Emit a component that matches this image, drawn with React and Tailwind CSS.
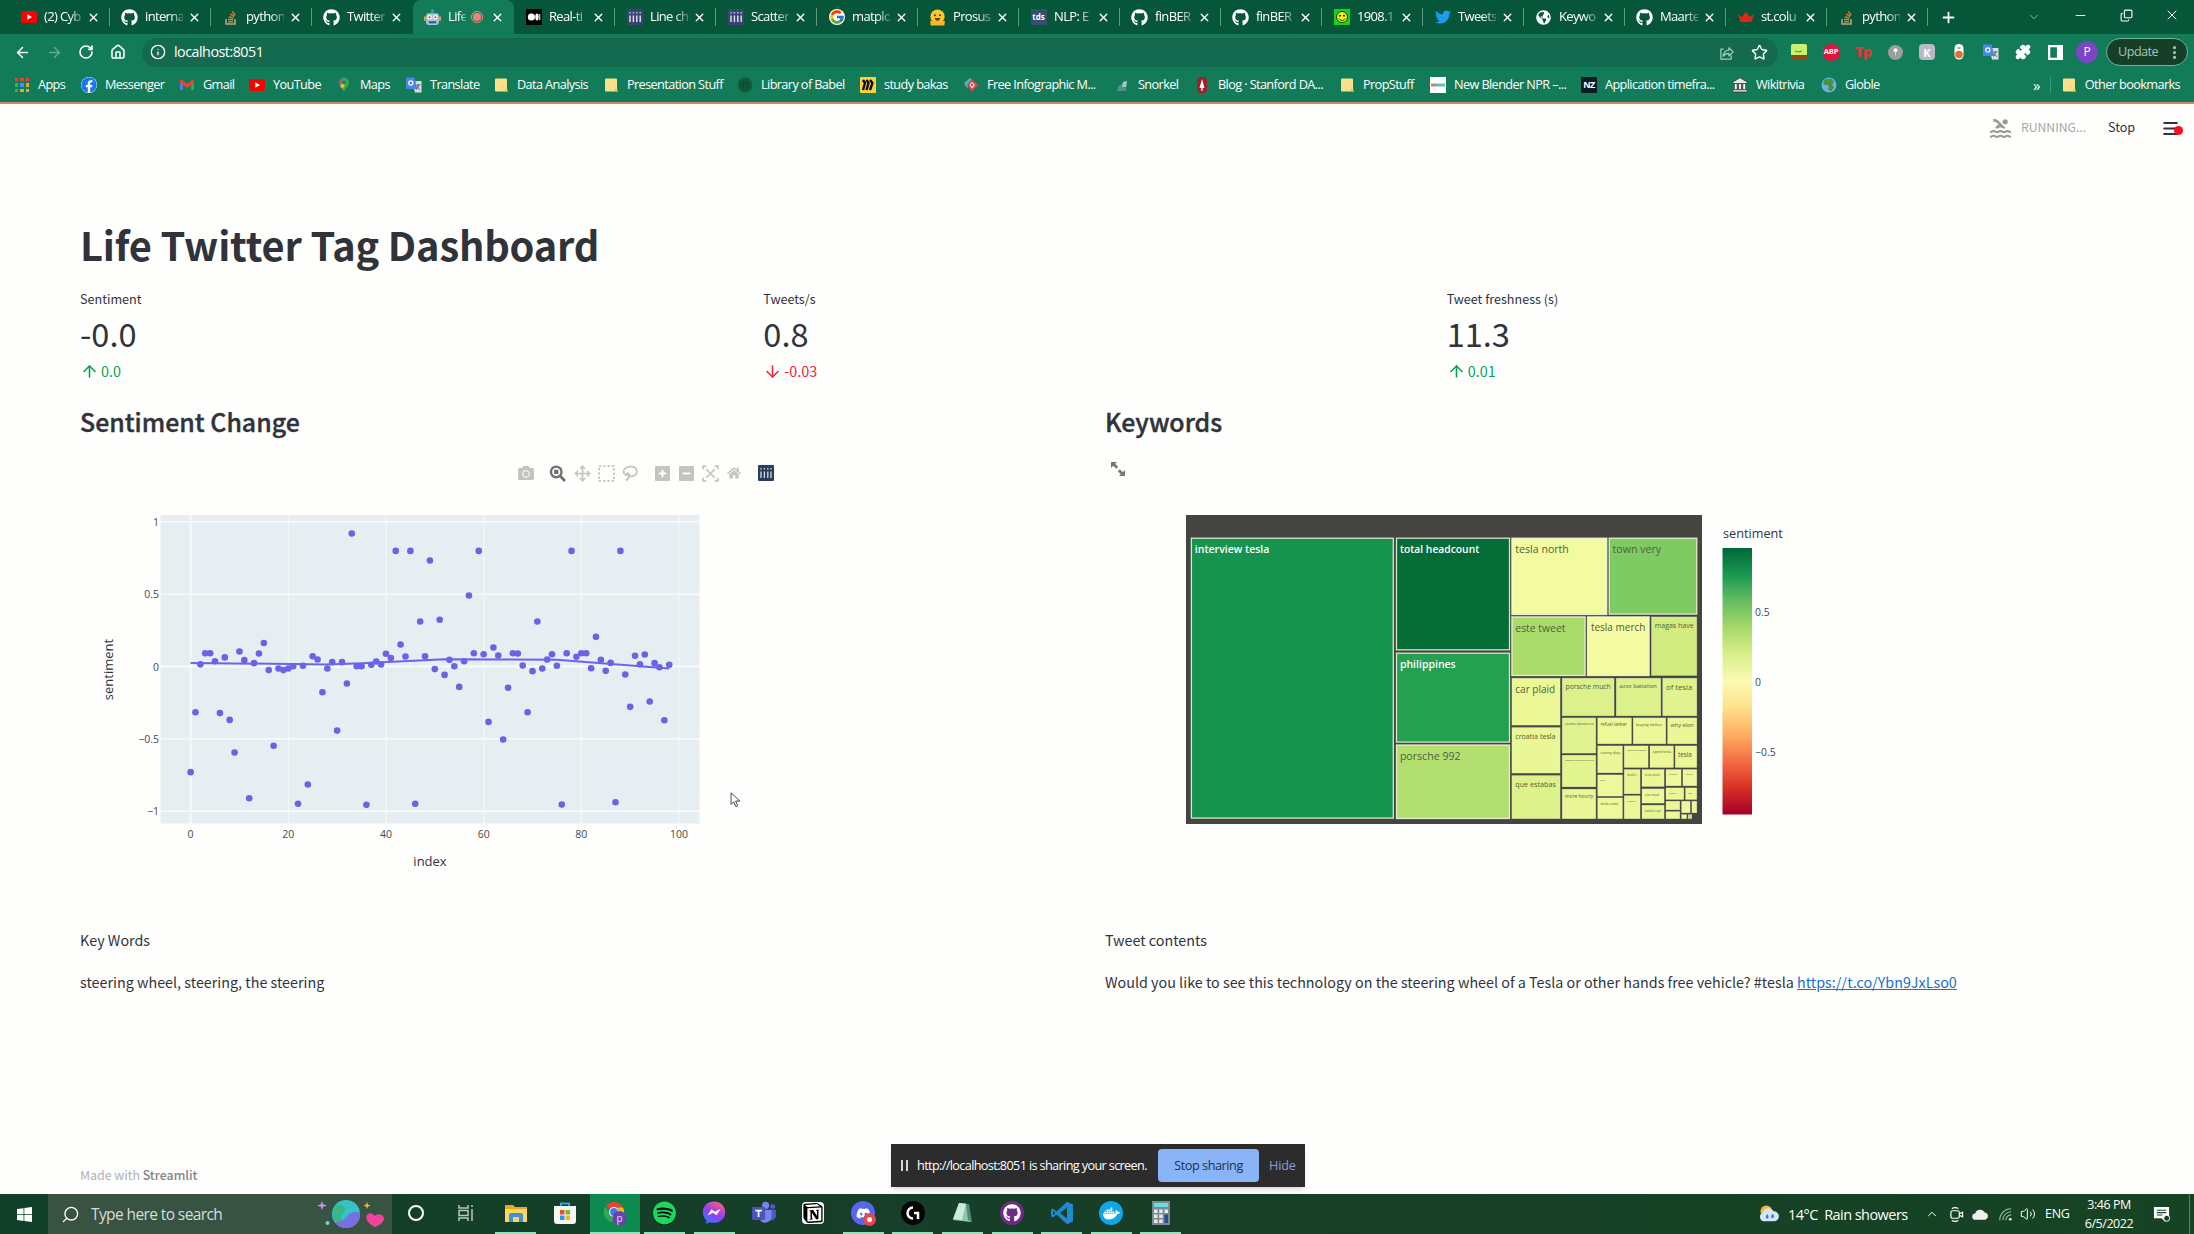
import React from "react";
import {
  FaGithub, FaTwitter, FaFacebook, FaSpotify,
  FaDiscord, FaDocker, FaCamera, FaHome, FaGlobeAmericas,
} from "react-icons/fa";
import { FcGoogle } from "react-icons/fc";
import { SiNotion } from "react-icons/si";
import { MdPool } from "react-icons/md";
import {
  ArrowLeft, ArrowRight, ArrowUp, ArrowDown, RotateCw, House, Info, Star, X, Plus, Minus,
  ChevronDown, ChevronUp, Copy, Search, Move, Volume2, Puzzle, Menu, EllipsisVertical,
} from "lucide-react";

const UI = "font-['Open_Sans','Noto_Sans',sans-serif]";
const SOURCE = "font-['Noto_Sans_CJK_SC','Noto_Sans',sans-serif]";

/* ---------- small drawn icons ---------- */

const Yt = () => (
  <svg viewBox="0 0 16 16" className="size-4"><rect y="2" width="16" height="12" rx="2" fill="#f00" /><path d="M6.3 5.2v5.6L11 8z" fill="#fff" /></svg>
);
const Gh = () => <FaGithub className="size-[17px] text-white" />;
const So = () => (
  <svg viewBox="0 0 16 16" className="size-4">
    <path d="M3 10v5h9v-5" fill="none" stroke="#b9a68c" strokeWidth="1.5" />
    <path d="M5 12.7h5M5.1 10.2l5 .6M5.8 7.6l4.7 1.5M7.2 4.9l4 2.7M9.5 2.5l2.6 4" stroke="#e07b2c" strokeWidth="1.4" />
  </svg>
);
const Robot = () => (
  <svg viewBox="0 0 16 16" className="size-[17px]">
    <rect x="2" y="4" width="12" height="11" rx="2" fill="#9fc8dc" /><rect x="0" y="7" width="2" height="4" fill="#e9a23b" /><rect x="14" y="7" width="2" height="4" fill="#e9a23b" />
    <rect x="7" y="1" width="2" height="3" fill="#5f8ea5" /><circle cx="8" cy="1.5" r="1.5" fill="#4a90c0" />
    <circle cx="5.3" cy="7.8" r="2.1" fill="#fff" /><circle cx="10.7" cy="7.8" r="2.1" fill="#fff" /><circle cx="5.3" cy="7.8" r="1" fill="#c73737" /><circle cx="10.7" cy="7.8" r="1" fill="#c73737" />
    <rect x="4.5" y="11.5" width="7" height="2" fill="#345d70" />
  </svg>
);
const Medium = () => (
  <svg viewBox="0 0 16 16" className="size-4"><rect width="16" height="16" fill="#000" /><circle cx="5.4" cy="8" r="3.6" fill="#fff" /><ellipse cx="11" cy="8" rx="1.7" ry="3.4" fill="#fff" /><rect x="13.3" y="5" width="1" height="6" fill="#fff" /></svg>
);
const Plotly = () => (
  <svg viewBox="0 0 16 16" className="size-4"><rect width="16" height="16" rx="1" fill="#3a4470" /><path d="M3 6.5V13M6.4 6.5V13M9.8 6.5V13M13.2 6.5V13" stroke="#dfe6ee" strokeWidth="1.4" /><path d="M3 3v1.6M6.4 3v1.6M9.8 3v1.6M13.2 3v1.6" stroke="#b7c6dd" strokeWidth="1.4" /></svg>
);
const Hug = () => (
  <svg viewBox="0 0 16 16" className="size-[17px]"><circle cx="8" cy="7.2" r="6.7" fill="#fcc62d" /><path d="M1 11c2 0 3 2 3 4.5H1.5zM15 11c-2 0-3 2-3 4.5h2.500z" fill="#f7a91e" /><rect x="2" y="11" width="12" height="4.500" rx="2" fill="#f9b825" /><circle cx="5.6" cy="5.900" r="1" fill="#3a3b45" /><circle cx="10.400" cy="5.900" r="1" fill="#3a3b45" /><path d="M5.500 8.500h5c0 3.300-5 3.300-5 0" fill="#7a2a20" /></svg>
);
const Tds = () => <span className="flex size-4 items-center justify-center bg-[#35506f] text-[8px] font-bold leading-none text-white">tds</span>;
const Smiley = () => (
  <svg viewBox="0 0 16 16" className="size-4"><rect width="16" height="16" fill="#12d41c" /><circle cx="8" cy="8" r="5.5" fill="#f6f01c" stroke="#233" /><circle cx="6" cy="6.700" r=".9" /><circle cx="10" cy="6.700" r=".9" /><path d="M5 9.500c1.500 2.500 4.500 2.500 6 0" stroke="#222" fill="none" /></svg>
);
const Crown = () => (
  <svg viewBox="0 0 16 16" className="size-4"><path d="M0 5l4 3 4-5 4 5 4-3-2.500 8h-11z" fill="#e0271c" /></svg>
);
const Folder = () => (
  <svg viewBox="0 0 16 16" className="size-4"><path d="M3 1.500h10a1 1 0 0 1 1 1v9l.8 3H3a1 1 0 0 1-1-1v-11a1 1 0 0 1 1-1z" fill="#fbe08a" /><path d="M12 11.500l2.800 3H12z" fill="#e6b94a" /></svg>
);
const AppsGrid = () => {
  const c = ["#e5443a", "#e5443a", "#e5443a", "#3fae5a", "#4d8df5", "#e3a53a", "#3fae5a", "#e3a53a", "#e3a53a"];
  return <span className="grid grid-cols-3 gap-[2px]">{c.map((k, i) => <i key={i} className="size-[3.500px]" style={{ background: k }} />)}</span>;
};
const Gmail = () => (
  <svg viewBox="0 0 16 16" className="size-4"><path d="M15 3.500v9.500h-3V7z" fill="#34a853" /><path d="M1 13V3.800L2.500 2.500 8 7l5.500-4.500L15 3.800V6L8 11 3.800 7.600V13z" fill="#ea4335" /><path d="M1 6v7h2.800V8.200z" fill="#4285f4" /></svg>
);
const MapPin = () => (
  <svg viewBox="0 0 16 16" className="size-4"><path d="M8 .5a5 5 0 0 0-5 5c0 3 3.500 5 5 10z" fill="#4285f4" /><path d="M8 .5a5 5 0 0 1 5 5c0 3-3.500 5-5 10z" fill="#34a853" /><path d="M3.200 7l5-5.800L3.900 2.600z" fill="#ea4335" /><path d="M4 9l3-3 2 2-2.500 4z" fill="#fbbc04" /><circle cx="8" cy="5.500" r="1.800" fill="#1b7a58" /></svg>
);
const Translate = () => (
  <svg viewBox="0 0 16 16" className="size-4"><path d="M6 4h9.500v11.500H9z" fill="#d9dde2" /><path d="M1 .5h7.500l3 11.500H1a1 1 0 0 1-1-1V1.500a1 1 0 0 1 1-1z" fill="#4a86e8" /><circle cx="4.800" cy="6" r="2.100" fill="none" stroke="#fff" strokeWidth="1.200" /><path d="M10.500 8h4M12.500 7v1c0 2-1 3.500-2.500 4.500M11.500 9.500c.5 1.500 1.500 2.500 2.500 3" stroke="#5f6368" fill="none" /></svg>
);
const Babel = () => <svg viewBox="0 0 16 16" className="size-4"><circle cx="8" cy="8" r="7.500" fill="#0f5c3c" /><path d="M4 5v6M6.500 4v8M9 4v8M11.500 5v6" stroke="#0a4630" /></svg>;
const Miro = () => <svg viewBox="0 0 16 16" className="size-4"><rect width="16" height="16" rx="1" fill="#fed13a" /><path d="M3 3l2 3-2 7M6.500 3l2 3-2 7M10 3l2.500 3-2.500 7" stroke="#0b0b1e" strokeWidth="2.400" fill="none" /></svg>;
const Infog = () => <svg viewBox="0 0 16 16" className="size-4"><path d="M1 6l6-5 3 3-6 7z" fill="#45b8c4" /><path d="M9 2l6 6-6 7-5-7z" fill="#d8434f" /><path d="M9 5l3 3-3 3.500L6.500 8z" fill="#fff" /><circle cx="9" cy="8" r="1.400" fill="#d8434f" /></svg>;
const Snork = () => <svg viewBox="0 0 16 16" className="size-4"><path d="M3 14c0-4 2-6 4-6l2-3 4-1-1 10z" fill="#4f8f8a" /><path d="M9 5l4-1-1 6H8z" fill="#a9c6ca" /></svg>;
const Stanford = () => <svg viewBox="0 0 16 16" className="size-4"><path d="M5 0h6l2 3v10l-2 3H5l-2-3V3z" fill="#a11f26" /><path d="M8 2l2.500 9h-5zM7.400 11h1.200v3H7.400z" fill="#fff" /></svg>;
const Blender = () => <span className="flex size-4 items-center justify-center overflow-hidden bg-white"><svg viewBox="0 0 16 16" className="size-4"><path d="M1 6.500h5v3H1z" fill="#e57b51" /><path d="M6 6.500h9v3H6z" fill="#65b8c5" /></svg></span>;
const Nz = () => <span className="flex size-4 items-center justify-center bg-[#0b1a25] text-[9px] font-bold leading-none text-white">NZ</span>;
const Temple = () => <svg viewBox="0 0 16 16" className="size-4"><path d="M8 .8L15.200 5v1.500H.8V5z" fill="#e8e8ea" stroke="#333" strokeWidth=".8" /><path d="M2.500 6.500h11v6h-11z" fill="#555" /><path d="M3.800 7v5.500M8 7v5.500M12.200 7v5.500" stroke="#fff" strokeWidth="1.800" /><path d="M.8 12.700h14.400V15H.8z" fill="#e8e8ea" stroke="#333" strokeWidth=".8" /></svg>;
const Globe = () => <svg viewBox="0 0 16 16" className="size-4"><circle cx="8" cy="8" r="7.500" fill="#6cb2e0" /><path d="M4 2.500l6-1 3 3-2 3 2 3-3 4-3-2 1-4-5-1-1-2z" fill="#4b8f43" /></svg>;

/* ---------- browser chrome ---------- */

const tabs = [
  ["(2) Cyb", Yt], ["interna", Gh], ["python", So], ["Twitter", Gh], ["Life", Robot], ["Real-ti", Medium],
  ["Line ch", Plotly], ["Scatter", Plotly], ["matplo", () => <FcGoogle className="size-4 rounded-full bg-white" />], ["Prosus", Hug], ["NLP: E", Tds],
  ["finBER", Gh], ["finBER", Gh], ["1908.1", Smiley], ["Tweets", () => <FaTwitter className="size-4 text-[#1d9bf0]" />],
  ["Keywo", () => <FaGlobeAmericas className="size-[15px] text-white" />], ["Maarte", Gh], ["st.colu", Crown], ["python", So],
];

function TabStrip() {
  return (
    <div className="flex h-[34px] bg-[#06573a] pl-[9px] text-white">
      {tabs.map(([t, Icon], i) => {
        const on = i === 4;
        return (
          <div key={i} className={`flex w-[101px] shrink-0 items-center pl-[11px] ${on ? "rounded-t-lg bg-[#127c59]" : ""}`}>
            <span className="flex w-[17px] justify-center"><Icon /></span>
            <span className={`ml-[7px] whitespace-nowrap text-[13px] tracking-[-0.65px] [mask-image:linear-gradient(to_right,#000_65%,#0004)] ${on ? "w-[18px]" : "w-[38px]"}`}>{t}</span>
            {on && <span className="ml-[5px] mr-[3px] flex size-[12px] items-center justify-center rounded-full border border-[#ef8a86]"><i className="size-[8px] rounded-full bg-[#f0817c]" /></span>}
            <X className="ml-[5px] size-[13px] shrink-0" strokeWidth={2.600} />
            {!on && i !== 3 && <i className="ml-auto h-[18px] w-px bg-[#5d9b84]" />}
          </div>
        );
      })}
      <div className="flex w-[40px] items-center justify-center"><Plus className="size-[17px]" strokeWidth={2.500} /></div>
      <div className="ml-auto flex items-center">
        <span className="flex w-[46px] justify-center"><ChevronDown className="size-[14px] text-[#9cc4b4]" strokeWidth={1.500} /></span>
        <span className="mb-1 flex w-[46px] justify-center"><Minus className="size-[15px]" strokeWidth={1.500} /></span>
        <span className="mb-1 flex w-[46px] justify-center"><Copy className="size-[13px] -scale-x-100 rotate-180" strokeWidth={2} /></span>
        <span className="mb-1 flex w-[45px] justify-center"><X className="size-[16px]" strokeWidth={1.500} /></span>
      </div>
    </div>
  );
}

function Toolbar() {
  const nav = "flex w-8 justify-center";
  return (
    <div className="flex h-[36px] items-center bg-[#127c59] pl-[6px] text-white">
      <span className={nav}><ArrowLeft className="size-[17px]" /></span>
      <span className={nav}><ArrowRight className="size-[17px] text-[#64ab90]" /></span>
      <span className={nav}><RotateCw className="size-[16px]" strokeWidth={2.400} /></span>
      <span className={nav}><House className="size-[16px]" strokeWidth={2.300} /></span>
      <div className="ml-[8px] flex h-[29px] w-[1636px] items-center rounded-full bg-[#136a4f] pl-[8px] pr-[10px]">
        <Info className="size-[16px]" strokeWidth={2} />
        <span className="ml-[8px] text-[14.300px] tracking-[-0.5px]">localhost:8051</span>
        <svg viewBox="0 0 16 16" className="ml-auto size-[15px]"><path d="M5 4.500H2V15h11v-4M4.500 12c.3-4 2.500-6.200 6-6.400V3l4.700 4.300-4.700 4.200V9c-2.700 0-4.500.8-6 3z" fill="none" stroke="#9fd0bd" strokeWidth="1.300" strokeLinejoin="round" /></svg>
        <Star className="ml-[17px] size-[17px]" />
      </div>
      <div className="ml-[5px] flex items-center">
        <span className={nav}><svg viewBox="0 0 16 16" className="size-4"><rect width="16" height="16" rx="2" fill="#c9f06c" /><rect y="11" width="16" height="5" fill="#8a4b1c" /><path d="M4 7l3 1 4-1" stroke="#5b8a2a" fill="none" /></svg></span>
        <span className={nav}><span className="flex size-[17px] items-center justify-center rounded-full bg-[#e4123f] text-[7.500px] font-bold tracking-tight">ABP</span></span>
        <span className={`${nav} text-[14px] font-extrabold leading-none tracking-tighter text-[#d83c30]`}>Tp</span>
        <span className={nav}><svg viewBox="0 0 16 16" className="size-[15px]"><circle cx="8" cy="8" r="8" fill="#9d9d9d" /><circle cx="8" cy="5.500" r="2" fill="#fff" /><path d="M8 7v4" stroke="#ddd" /></svg></span>
        <span className={nav}><span className="flex size-4 items-center justify-center rounded-sm bg-[#b9bac4] text-[11px] font-bold leading-none">K</span></span>
        <span className={nav}><svg viewBox="0 0 10 16" className="h-4"><rect x=".5" width="9" height="15.500" rx="4.500" fill="#fff" /><circle cx="5" cy="10.500" r="3.800" fill="#e0702a" /><path d="M3.500 4h3" stroke="#555" /></svg></span>
        <span className={nav}><Translate /></span>
        <span className={nav}><Puzzle className="size-4 fill-white" /></span>
        <span className={nav}><svg viewBox="0 0 16 16" className="size-[15px]"><path d="M1.200 1.200h13.600v13.600H1.200z" fill="none" stroke="#fff" strokeWidth="2.400" /><path d="M9.500 1h5.500v14H9.500z" fill="#fff" /></svg></span>
        <span className={nav}><span className="flex size-[22px] shrink-0 items-center justify-center rounded-full bg-[#7b45c4] text-[12px]">P</span></span>
        <div className="ml-[3px] flex h-[28px] w-[82px] items-center rounded-full border border-[#6fb58f] bg-[#163f2a] pl-[11px] text-[12.600px] tracking-[-0.5px] text-[#a3c9af]">
          Update<EllipsisVertical className="ml-auto mr-[4px] size-[17px]" strokeWidth={2.500} />
        </div>
      </div>
    </div>
  );
}

const bookmarks = [
  ["Apps", AppsGrid, 67], ["Messenger", () => <FaFacebook className="size-4 rounded-full bg-white text-[#1877f2]" />, 98], ["Gmail", Gmail, 70],
  ["YouTube", Yt, 87], ["Maps", MapPin, 70], ["Translate", Translate, 87], ["Data Analysis", Folder, 110],
  ["Presentation Stuff", Folder, 134], ["Library of Babel", Babel, 123], ["study bakas", Miro, 103], ["Free Infographic M...", Infog, 151],
  ["Snorkel", Snork, 80], ["Blog · Stanford DA...", Stanford, 145], ["PropStuff", Folder, 91], ["New Blender NPR –...", Blender, 151],
  ["Application timefra...", Nz, 151], ["Wikitrivia", Temple, 89], ["Globle", Globe, 90],
];

function Bookmarks() {
  return (
    <div className="flex h-[34px] items-center whitespace-nowrap border-b-2 border-[#c98a68] bg-[#127c59] pb-[2px] pl-[14px] text-[12.700px] tracking-[-0.600px] text-white">
      {bookmarks.map(([t, Icon, w]) => (
        <div key={t} className="flex shrink-0 items-center" style={{ width: w }}>
          <span className="mr-[8px] flex w-4 justify-center"><Icon /></span>{t}
        </div>
      ))}
      <span className="ml-auto mr-[10px] text-[15px] leading-[16px]">»</span>
      <i className="mr-[10px] h-4 w-px bg-[#3b9a78]" />
      <Folder /><span className="ml-[8px] mr-[14px]">Other bookmarks</span>
    </div>
  );
}

/* ---------- dashboard ---------- */

function Metric({ label, value, delta, up }) {
  const Arrow = up ? ArrowUp : ArrowDown;
  return (
    <div>
      <div className="h-[23px] text-[12.600px] leading-[22px]">{label}</div>
      <div className="h-[48px] text-[32.600px] leading-[44px]">{value}</div>
      <div className={`flex h-[24px] items-center text-[14.400px] leading-[24px] ${up ? "text-[#09a34f]" : "text-[#f0283c]"}`}>
        <Arrow className="mr-[2px] size-[19px]" strokeWidth={2} /><span className="-mt-[1px]">{delta}</span>
      </div>
    </div>
  );
}

// Sentiment score of each tweet, by index.
const scores = [
  -0.730, -0.316, 0.015, 0.092, 0.092, 0.036, -0.322, 0.063, -0.369, -0.594, 0.104, 0.044, -0.910, 0.023, 0.090,
  0.162, -0.025, -0.548, -0.014, -0.025, -0.014, 0.002, -0.949, 0.005, -0.815, 0.071, 0.048, -0.178, -0.014, 0.030,
  -0.443, 0.030, -0.118, 0.919, 0.002, 0.002, -0.956, 0.012, 0.035, 0.014, 0.088, 0.058, 0.799, 0.152, 0.069,
  0.799, -0.949, 0.311, 0.071, 0.733, -0.018, 0.323, -0.058, 0.046, 0.002, -0.141, 0.036, 0.491, 0.092, 0.799,
  0.085, -0.383, 0.131, 0.076, -0.505, -0.147, 0.092, 0.090, 0.007, -0.316, -0.032, 0.311, -0.014, 0.048, 0.085,
  0.005, -0.954, 0.092, 0.799, 0.067, 0.092, 0.092, -0.012, 0.205, 0.046, -0.030, 0.025, -0.938, 0.799, -0.055,
  -0.279, 0.074, 0.016, 0.083, -0.242, 0.023, -0.005, -0.371, 0.012,
];
const px = (i) => 80.600 + i * 4.884;
const py = (v) => 217.500 - v * 144.700;

function ScatterPlot() {
  return (
    <svg width="680" height="424" className={`block overflow-visible ${UI}`} fontSize="12">
      <rect x="50.500" y="66" width="539" height="308.500" fill="#e6eef1" />
      {[20, 40, 60, 80, 100].map((t) => <path key={t} d={`M${px(t)} 66V374.500`} stroke="#f6fafa" />)}
      {[-1, -0.5, 0.5, 1].map((t) => <path key={t} d={`M50.500 ${py(t)}H589.500`} stroke="#f8fbfb" strokeWidth="1.500" />)}
      <path d={`M${px(0)} 66V374.500M50.500 ${py(0)}H589.500`} stroke="#f8fbfb" strokeWidth="2" />
      {scores.map((s, i) => <circle key={i} cx={px(i)} cy={py(s)} r="3.300" fill="#6a63e4" />)}
      <path d={[[0, 0.025], [28, 0.014], [35, 0.023], [52, 0.050], [75, 0.046], [98, -0.014]].map(([i, v], k) => `${k ? "L" : "M"}${px(i)} ${py(v)}`).join("")} stroke="#6a63f4" strokeWidth="2" fill="none" />
      <g fill="#444a52" fontSize="10.500" textAnchor="end">
        {[[1, "1"], [0.5, "0.5"], [0, "0"], [-0.5, "−0.5"], [-1, "−1"]].map(([v, t]) => <text key={t} x="49" y={py(v) + 4}>{t}</text>)}
      </g>
      <g fill="#444a52" fontSize="10.500" textAnchor="middle">
        {[0, 20, 40, 60, 80, 100].map((t) => <text key={t} x={px(t)} y="388.500">{t}</text>)}
      </g>
      <g fill="#31333f" fontSize="13" textAnchor="middle">
        <text x="320" y="416.500">index</text>
        <text transform="translate(3 220.500) rotate(-90)">sentiment</text>
      </g>
    </svg>
  );
}

function ModeBar() {
  const g = "text-[#c3c4bf]";
  return (
    <div className={`flex h-[20px] items-center pl-[438px] ${g}`}>
      <FaCamera className="size-[16px]" />
      <svg viewBox="0 0 16 16" className="ml-[15px] size-[17px]"><circle cx="6.800" cy="6.500" r="5" fill="none" stroke="#6f706d" strokeWidth="2.200" /><path d="M10.500 10.200l4.500 4.800" stroke="#6f706d" strokeWidth="2.600" /><rect x="4.800" y="4.500" width="4" height="4" fill="#6f706d" /></svg>
      <Move className="ml-[8px] size-[17px]" strokeWidth={2.300} />
      <svg viewBox="0 0 16 16" className="ml-[7px] size-[17px]"><rect x="1" y="1" width="14" height="14" fill="none" stroke="#c3c4bf" strokeWidth="1.700" strokeDasharray="2.200 1.800" /></svg>
      <svg viewBox="0 0 16 16" className="ml-[7px] size-[17px]"><path d="M4 10C-1 7 2 1.500 8.500 1.500S16 9 10 10.500c-3 .7-5.500-.5-5.500-2s3-1 2.500 1.500S5 14 3.500 14.500" fill="none" stroke="#c3c4bf" strokeWidth="1.600" /></svg>
      <svg viewBox="0 0 16 16" className="ml-[16px] size-[15px]"><rect width="16" height="16" rx="1" fill="#c3c4bf" /><path d="M8 4v8M4 8h8" stroke="#fff" strokeWidth="2" /></svg>
      <svg viewBox="0 0 16 16" className="ml-[9px] size-[15px]"><rect width="16" height="16" rx="1" fill="#c3c4bf" /><path d="M4 8h8" stroke="#fff" strokeWidth="2" /></svg>
      <svg viewBox="0 0 16 16" className="ml-[8px] size-[17px]"><path d="M1 4V1h3M12 1h3v3M15 12v3h-3M4 15H1v-3M4 4l8 8M12 4l-8 8" stroke="#c3c4bf" strokeWidth="1.600" fill="none" /></svg>
      <FaHome className="ml-[8px] size-[14px]" />
      <svg viewBox="0 0 16 16" className="ml-[17px] size-4"><rect width="16" height="16" rx="1" fill="#2c3c5c" /><path d="M3 6.500V13M6.400 6.500V13M9.800 6.500V13M13 6.500V13" stroke="#c8e0e4" strokeWidth="1.300" /><path d="M3 3v1.600M6.400 3v1.600M9.800 3v1.600M13 3v1.600" stroke="#c8e0e4" strokeWidth="1.300" /></svg>
    </div>
  );
}

// x0, x1, y0, y1, fill, label, label size, label colour
const tiles = [
  [5.2, 207.5, 23, 303.3, "#16944f", "interview tesla", 10.5, "#fff"],
  [210.3, 323.7, 23, 135, "#046c37", "total headcount", 10.3, "#fff"],
  [210.3, 323.7, 138, 227.3, "#23a050", "philippines", 10.5, "#fff"],
  [210.3, 323.7, 229.8, 303.7, "#b3df71", "porsche 992", 10.6],
  [325.7, 421, 23, 99.7, "#f2fb9f", "tesla north", 10.6],
  [423, 511, 23, 99.3, "#7fcb63", "town very", 10.6],
  [325.7, 399.3, 101.7, 160.7, "#abdb6d", "este tweet", 10.4],
  [401.3, 463.3, 101.7, 160.7, "#f5fba3", "tesla merch", 10],
  [465.2, 511, 101.7, 160.7, "#d3ec81", "magas have", 7],
  [325.7, 374.3, 163, 210.3, "#ebf895", "car plaid", 10],
  [325.7, 374.3, 212.3, 258.3, "#eaf796", "croatia tesla", 7.1],
  [325.7, 374.3, 260.3, 303.9, "#ddf28b", "que estabas", 7.2],
  [376, 428.3, 163, 201, "#dcf18c", "porsche much", 6.8],
  [430, 475, 163, 201, "#dcf18c", "azov battalion", 5.7],
  [476.5, 511, 163, 201, "#e0f38e", "of tesla", 7.7],
  [376, 410, 202.7, 238.3, "#e1f391", "contra business", 3.9],
  [411.5, 445.7, 202.7, 229, "#edf89a", "refuel tanker", 4.4],
  [447, 480, 202.7, 229, "#ebf798", "buying twitter", 4.1],
  [481.4, 511, 202.7, 229, "#eaf697", "why elon", 5.6],
  [376, 410, 240, 272, "#e3f590", "monkeys on motorcycles", 2.5],
  [376, 410, 274, 303.9, "#eaf796", "more hourly", 4.9],
  [411.5, 436.7, 230.7, 258, "#eaf796", "sunny day", 4.1],
  [438, 462.3, 230.7, 252.7, "#ebf797", "supercharger stations", 1.9],
  [463.8, 487.7, 230.7, 252.7, "#ebf797", "speed tesla", 3.5],
  [489, 511, 230.7, 252.7, "#ebf797", "tesla", 6.3],
  [411.5, 436.7, 259.7, 281.3, "#edf89a", "tesla", 2],
  [411.5, 436.7, 282.7, 303.9, "#edf89a", "tesla semi", 3.8],
  [438, 454.3, 254.3, 279, "#e8f694", "model s", 2.7],
  [438, 454.3, 280.5, 303.9, "#ebf797", "a range", 2.4],
  [455.8, 478.3, 254.3, 271.7, "#ebf797", "tesla stock", 3],
  [455.8, 478.3, 273.7, 288.3, "#edf89a", "elon musk", 3],
  [455.8, 478.3, 290, 303.9, "#e9f695", "market cap", 3],
  [479.8, 495.3, 254.3, 271, "#edf89a", "charging", 2.2],
  [496.7, 511, 254.3, 271, "#edf89a", "battery", 2.2],
  [479.8, 498, 272.7, 284.7, "#ebf797", "delivery", 2.2],
  [499.3, 511, 272.7, 284.7, "#ebf797", "wait", 2],
  [479.8, 494, 286, 295, "#ebf797"],
  [479.8, 494, 296.4, 303.9, "#edf89a"],
  [495.4, 504.3, 286, 298, "#edf89a"],
  [505.7, 511, 286, 298, "#edf89a"],
  [495.4, 500.8, 299.4, 303.9, "#edf89a"],
  [502, 506, 299.4, 303.9, "#d5e090"],
];

function Treemap() {
  return (
    <svg width="620" height="320" className={`block ${UI}`}>
      <rect width="516" height="309" fill="#464440" />
      {tiles.map(([x0, x1, y0, y1, fill, label, size, ink], i) => (
        <g key={i}>
          <rect x={x0 + 0.2} y={y0 + 0.2} width={x1 - x0 - 0.4} height={y1 - y0 - 0.4} fill={fill} stroke="#f4fbe0" strokeOpacity={i < 8 ? 0.85 : 0.4} strokeWidth={i < 8 ? 1.3 : 0.6} />
          {label && <text x={x0 + (i < 15 ? 3.600 : 3)} y={y0 + (size > 6 ? 4.500 : 3.800) + size} fontSize={size} fontWeight={ink ? 600 : 400} fill={ink || "#4f5f3c"}>{label}</text>}
        </g>
      ))}
      <defs>
        <linearGradient id="rdylgn" x1="0" y1="0" x2="0" y2="1">
          {["#006837", "#1a9850", "#66bd63", "#a6d96a", "#d9ef8b", "#fbfab4", "#fee08b", "#fdae61", "#f46d43", "#d73027", "#a50026"].map((c, i) => <stop key={c} offset={`${i * 10}%`} stopColor={c} />)}
        </linearGradient>
      </defs>
      <rect x="536.500" y="33" width="29.500" height="266.500" fill="url(#rdylgn)" />
      <text x="537" y="22.500" fontSize="12.700" fill="#31333f">sentiment</text>
      <g fontSize="10.500" fill="#444a52"><text x="569" y="100.500">0.5</text><text x="569" y="171">0</text><text x="569" y="241">−0.5</text></g>
    </svg>
  );
}

function Dashboard() {
  return (
    <main className={`flex h-[1090px] flex-col bg-[#fefefd] text-[#31333b] ${SOURCE}`}>
      <div className="flex h-[48px] items-center justify-end pr-[14px]">
        <MdPool className="size-[25px] text-[#9a9b96]" />
        <span className="-mt-[1px] ml-[8px] w-[87px] text-[12.200px] text-[#a6a7a8]">RUNNING...</span>
        <span className="-mt-[1px] w-[53px] text-[12.600px]">Stop</span>
        <div className="relative"><Menu className="size-[19px]" strokeWidth={2.400} /><i className="absolute -right-[3px] top-[7px] size-[9px] rounded-full bg-[#f50f1e]" /></div>
      </div>
      <div className="px-[80px]">
        <h1 className="mt-[59px] h-[66px] whitespace-nowrap text-[39.800px] font-bold leading-[66px] tracking-[-0.2px]">Life Twitter Tag Dashboard</h1>
        <div className="mt-[11px] grid grid-cols-3 gap-x-[16px]">
          <Metric label="Sentiment" value="-0.0" delta="0.0" up />
          <Metric label="Tweets/s" value="0.8" delta="-0.03" />
          <Metric label="Tweet freshness (s)" value="11.3" delta="0.01" up />
        </div>
        <div className="mt-[17px] grid grid-cols-2 gap-x-[16px]">
          <section>
            <h2 className="h-[42px] text-[24.900px] font-medium leading-[42px] [-webkit-text-stroke:0.4px_#31333b]">Sentiment Change</h2>
            <div className="mt-[21px]"><ModeBar /></div>
            <div className="-mt-[34px] pl-[30px]"><ScatterPlot /></div>
          </section>
          <section>
            <h2 className="h-[42px] text-[24.900px] font-medium leading-[42px] [-webkit-text-stroke:0.4px_#31333b]">Keywords</h2>
            <svg viewBox="0 0 16 16" className="ml-[5px] mt-[19px] size-[16px]"><path d="M1 1h6L5.200 2.800l3 3-2 2-3-3L1 7zM15 15H9l1.800-1.800-3-3 2-2 3 3L15 9z" fill="#777872" /></svg>
            <div className="ml-[81px] mt-[38px]"><Treemap /></div>
          </section>
        </div>
        <div className="mt-[54px] grid grid-cols-2 gap-x-[16px] whitespace-nowrap text-[14.330px] leading-[26px]">
          <div><p className="mb-[16px]">Key Words</p><p>steering wheel, steering, the steering</p></div>
          <div>
            <p className="mb-[16px]">Tweet contents</p>
            <p>Would you like to see this technology on the steering wheel of a Tesla or other hands free vehicle? #tesla <a className="text-[#1a6fc9] underline">https://t.co/Ybn9JxLso0</a></p>
          </div>
        </div>
      </div>
      <footer className="mb-[6px] mt-auto px-[80px] text-[12.400px] leading-[26px] text-[#b0b1b4]">Made with <span className="font-medium text-[#84858a]">Streamlit</span></footer>
    </main>
  );
}

function SharingBar() {
  return (
    <div className="absolute left-[891px] top-[1144px] flex h-[43px] w-[414px] items-center whitespace-nowrap bg-[#2b2c2b] pl-[10px] text-[12.700px] tracking-[-0.640px] text-white shadow-md">
      <i className="h-[11px] w-[7px] border-x-2 border-[#d5d5d5]" />
      <span className="ml-[9px] w-[241px]">http://localhost:8051 is sharing your screen.</span>
      <span className="flex h-[33px] w-[101px] items-center justify-center rounded bg-[#8ab4f8] tracking-[-0.450px] text-[#20314c]">Stop sharing</span>
      <span className="ml-[10px] tracking-[-0.2px] text-[#8b9fd6]">Hide</span>
    </div>
  );
}

/* ---------- taskbar ---------- */

const S = ({ children, box = "0 0 24 24", cls = "size-6" }) => <svg viewBox={box} className={cls}>{children}</svg>;

const apps = [
  [<S><circle cx="12" cy="12" r="7" fill="none" stroke="#fff" strokeWidth="2" /></S>, 0],
  [<S><path d="M5 4v3h9V4M5 20v-3h9v3M5 9.500h9v5H5zM18 4v2M18 8v12" fill="none" stroke="#b8c8be" strokeWidth="1.500" /></S>, 0],
  [<S><path d="M1 4h8l2 2h12v4H1z" fill="#e9a820" /><path d="M1 8h22v13H1z" fill="#fbd65f" /><path d="M5 21v-7a2 2 0 0 1 2-2h10a2 2 0 0 1 2 2v7h-4v-5H9v5z" fill="#3f8fdc" /></S>, 1],
  [<S><path d="M8 6V2.500h8V6" fill="none" stroke="#2aa5e6" strokeWidth="2" /><path d="M1 5h22v15a3 3 0 0 1-3 3H4a3 3 0 0 1-3-3z" fill="#f6f6f4" /><path d="M7 9h4.500v4.500H7z" fill="#e8502c" /><path d="M12.500 9H17v4.500h-4.500z" fill="#7fb820" /><path d="M7 14.500h4.500V19H7z" fill="#1f9fe6" /><path d="M12.500 14.500H17V19h-4.500z" fill="#fbb812" /></S>, 0],
  [<S><path d="M11 1a10 10 0 0 1 9 5.500H11A4.500 4.500 0 0 0 7 9L3 4.500A10 10 0 0 1 11 1z" fill="#ea4335" /><path d="M2.300 5.500A10 10 0 0 0 9.500 21l3-6a4.500 4.500 0 0 1-5.500-3z" fill="#34a853" /><path d="M20 6.500A10 10 0 0 1 11 21l4-7.500a4.500 4.500 0 0 0-1-7z" fill="#fbbc04" /><circle cx="11" cy="11" r="5" fill="#fff" /><circle cx="11" cy="11" r="3.900" fill="#3b7de8" /><circle cx="16.500" cy="17" r="7" fill="#6d3fb2" /><text x="16.500" y="20.500" fontSize="10" fill="#e6dcf5" textAnchor="middle">p</text></S>, 2],
  [<span className="flex size-[23px] items-center justify-center rounded-full bg-black"><FaSpotify className="size-6 text-[#1ed760]" /></span>, 1],
  [<S><defs><linearGradient id="msg" x1=".2" y1="1" x2=".8" y2="0"><stop offset="0" stopColor="#2a7bff" /><stop offset=".5" stopColor="#9a3cf5" /><stop offset="1" stopColor="#fb6172" /></linearGradient></defs><path d="M12 .5C5.500.500.800 5.200.800 11.300c0 3.300 1.300 6 3.500 8V23l3.400-1.800c1.300.4 2.800.6 4.300.6 6.500 0 11.200-4.600 11.200-10.600S18.500.500 12 .500z" fill="url(#msg)" /><path d="M5.500 14.500l4-6.300 3.400 2.600 5.600-2.800-4 6.200-3.400-2.500z" fill="#fff" /></S>, 1],
  [<S cls="size-[26px]"><circle cx="13.500" cy="5" r="3.300" fill="#7b83eb" /><circle cx="20" cy="6" r="2.300" fill="#5059c9" /><path d="M17 9h6v6a4 4 0 0 1-6 3z" fill="#5059c9" /><path d="M8 9h11v7a6 6 0 0 1-11 2z" fill="#7b83eb" /><rect x="1" y="6.500" width="12" height="12" rx="1" fill="#4b53bc" /><path d="M4 9.700h6M7 9.700v6" stroke="#fff" strokeWidth="1.600" /></S>, 0],
  [<span className="flex size-[22px] items-center justify-center rounded bg-white"><SiNotion className="size-[20px] text-black" /></span>, 0],
  [<span className="relative flex size-6 items-center justify-center rounded-full bg-[#5865f2]"><FaDiscord className="size-[15px] text-white" /><i className="absolute -bottom-[1px] -right-[1px] size-[13px] rounded-full border-[4px] border-[#e5484d] bg-white" /></span>, 1],
  [<S><circle cx="12" cy="12" r="12" fill="#050505" /><path d="M12 6.500a5.500 5.500 0 0 0 0 11M13 12h4v6" fill="none" stroke="#fff" strokeWidth="2.500" /></S>, 1],
  [<S><path d="M9 2l9 1 3 18-18-2z" fill="#8fc3ad" /><path d="M9 2l7 .8L12 19l-9-1z" fill="#cdebdd" /><path d="M16 3h3l3 18-4-2z" fill="#4c8b78" /></S>, 1],
  [<span className="flex size-6 items-center justify-center rounded-full bg-[#6e2a86]"><FaGithub className="size-[18px] text-white" /></span>, 1],
  [<S><path d="M17 .8l6 2.700v17L17 23.200 6.500 13.500 3 16.500 1 15.300v-6.600l2-1.200 3.500 3z" fill="#1f8ad2" /><path d="M17 6.500v11L10 12z" fill="#15402a" /><path d="M3 9.700v4.600L5.300 12z" fill="#15402a" /></S>, 1],
  [<span className="flex size-6 items-center justify-center rounded-full bg-[#0ea5ea]"><FaDocker className="size-[17px] text-white" /></span>, 1],
  [<S><rect x="3" y="0" width="18" height="24" fill="#7f8a90" /><rect x="5" y="2" width="14" height="4" fill="#5fe0ee" /><path d="M5 8.500h3.500v3.500H5zM10.200 8.500h3.500v3.500h-3.500zM15.500 8.500H19v3.500h-3.500zM5 13.500h3.500V17H5zM10.200 13.500h3.500V17h-3.500zM5 18.500h3.500V22H5zM10.200 18.500h3.500V22h-3.500z" fill="#e5eaed" /><path d="M15.500 13.500H19V22h-3.500z" fill="#1f4e9c" /></S>, 1],
];

function Taskbar() {
  return (
    <div className="flex h-[40px] items-stretch bg-linear-to-r from-[#10402a] via-[#183e28] to-[#154423] text-white">
      <div className="flex w-[48px] items-center justify-center"><S box="0 0 16 16" cls="size-[15px]"><path d="M0 2.200l7-1v6.400H0zM7.800 1.100L16 0v7.600H7.800zM0 8.400h7v6.400l-7-1zM7.800 8.400H16V16l-8.200-1.100z" fill="#fff" /></S></div>
      <div className="flex w-[343.500px] items-center bg-[#395343] pl-[13px]">
        <Search className="size-[19px] -scale-x-100" strokeWidth={1.700} />
        <span className="ml-[11px] mt-[1px] text-[15.500px] tracking-[-0.6px] text-[#d5ded8]">Type here to search</span>
        <svg viewBox="0 0 68 32" className="ml-auto mr-[7px] h-8 w-[68px]">
          <path d="M5 3l1.300 3.200L10 7.500 6.300 8.800 5 12 3.700 8.800 0 7.500l3.700-1.300z" fill="#c58cf0" /><circle cx="10.500" cy="25" r="2" fill="#7ed0d6" />
          <circle cx="29" cy="16" r="14" fill="#36c3c8" /><path d="M18 8c5-3 9-1 10 3s-4 3-4 7 2 6-1 9c-6-3-10-12-5-19z" fill="#38b887" /><path d="M43 15c1 9-6 15-14 15-5 0-9-3-11-6 6 0 9-2 12-6s9-5 13-3z" fill="#7a6fe0" />
          <path d="M50 4l1 2.500 2.500 1-2.500 1L50 11l-1-2.500-2.500-1 2.500-1z" fill="#f2b632" /><path d="M58 29c-8-4-10-9-8-12s6-2 7.500 1c2-2 7-3 9 1s-3 8-8.500 10z" fill="#f0449c" />
        </svg>
      </div>
      {apps.map(([icon, state], i) => (
        <div key={i} className="flex w-[49.650px] shrink-0 justify-center">
          <div className={`flex flex-col items-center ${state === 2 ? "w-full bg-[#0c8a50]" : "w-[41px]"}`}>
            <span className="flex h-[38px] items-center">{icon}</span>
            {state > 0 && <i className="h-[2px] w-full bg-[#8fe3bd]" />}
          </div>
        </div>
      ))}
      <div className="ml-auto flex items-center">
        <S box="0 0 24 20" cls="h-[18px] w-[22px]"><circle cx="9" cy="7" r="6.500" fill="#f3b83d" /><path d="M6 18a5 5 0 0 1-1-9.500A6.500 6.500 0 0 1 17 7a5.500 5.500 0 0 1 1 11z" fill="#d5e4f7" /><path d="M10 10c2 3 2 5 0 5s-2-2 0-5zM16 9.500c2 3 2 5 0 5s-2-2 0-5z" fill="#2d78d8" /></S>
        <span className="ml-[8px] mt-[1px] w-[137px] whitespace-nowrap text-[14.500px] tracking-[-0.55px]">14°C&nbsp; Rain showers</span>
        <span className="flex w-[24px]"><ChevronUp className="size-[14px]" strokeWidth={1.700} /></span>
        <S box="0 0 16 16" cls="size-[15px]"><rect x="2" y="4" width="9" height="8" rx="2" fill="none" stroke="#fff" strokeWidth="1.300" /><path d="M11.500 7l3-1.500v5l-3-1.500M3 1.500c2-1 5-1 7 0M3 14.500c2 1 5 1 7 0" fill="none" stroke="#fff" strokeWidth="1.200" /></S>
        <S box="0 0 16 10" cls="ml-[8px] h-[11px] w-[17px]"><path d="M3.500 10A3 3 0 0 1 3 4 5 5 0 0 1 12 3a3.600 3.600 0 0 1 .5 7z" fill="#eef0ee" /></S>
        <S box="0 0 16 16" cls="ml-[9px] size-[14px]"><path d="M2 15A13 13 0 0 1 15 2M5.500 15A9.500 9.500 0 0 1 15 5.500M9 15a6 6 0 0 1 6-6" fill="none" stroke="#a9bfb1" strokeWidth="1.200" /><circle cx="14" cy="14" r="1.500" fill="#fff" /></S>
        <Volume2 className="ml-[8px] size-[16px]" strokeWidth={1.500} />
        <span className="ml-[9px] mt-[1px] w-[38px] text-[12.500px] tracking-[-0.3px]">ENG</span>
        <div className="w-[52px] whitespace-nowrap text-center text-[12.500px] leading-[19px] tracking-[-0.45px]"><div>3:46 PM</div><div>6/5/2022</div></div>
        <S box="0 0 18 18" cls="ml-[18px] mr-[19px] size-[17px]"><path d="M1 1h16v12h-4v4l-4-4H1z" fill="#fff" /><path d="M4 4.500h10M4 7h10M4 9.500h6" stroke="#1b4228" strokeWidth="1.200" /><circle cx="14.500" cy="13" r="3.200" fill="#1b4228" stroke="#fff" /></S>
        <i className="mr-[4px] h-[40px] w-px bg-[#5d7d68]" />
      </div>
    </div>
  );
}

export default function App() {
  return (
    <div className={`relative h-[1234px] w-[2194px] overflow-hidden ${UI}`}>
      <TabStrip />
      <Toolbar />
      <Bookmarks />
      <Dashboard />
      <Taskbar />
      <SharingBar />
      <svg viewBox="0 0 12 18" className="absolute left-[730px] top-[792px] h-[16px] w-[11px]"><path d="M1 1v13l3-3 2.500 5.500 2-1L6.200 10.200H11z" fill="#fff" stroke="#333" strokeWidth="1" /></svg>
    </div>
  );
}
